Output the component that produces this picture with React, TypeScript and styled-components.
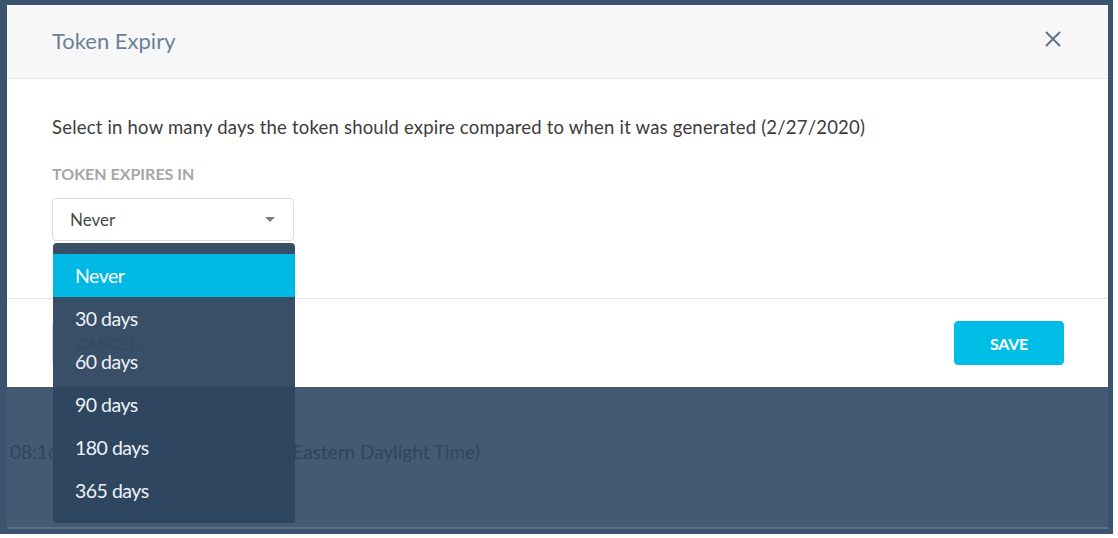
import styled, { createGlobalStyle } from "styled-components";

const GlobalStyle = createGlobalStyle`
  body {
    margin: 0;
    background: #ffffff;
    font-family: Lato, "Noto Sans", sans-serif;
  }
`;

const Frame = styled.div`
  width: 1113px;
  height: 534px;
  box-sizing: border-box;
  border-style: solid;
  border-color: #3a5470;
  border-width: 5px 5px 5px 7px;
  background: #435a72;
  display: flex;
  flex-direction: column;
`;

const Modal = styled.div`
  height: 382px;
  background: #ffffff;
  display: flex;
  flex-direction: column;
  flex-shrink: 0;
`;

const Header = styled.div`
  height: 74px;
  box-sizing: border-box;
  background: #f7f7f7;
  border-bottom: 1px solid #e3e7eb;
  display: flex;
  align-items: center;
  justify-content: space-between;
  padding: 0 46px 2px 45px;
`;

const Title = styled.h2`
  margin: 0;
  font-size: 22px;
  font-weight: 400;
  color: #6b8096;
`;

const CloseBtn = styled.button`
  border: 0;
  background: none;
  padding: 0;
  width: 18px;
  height: 18px;
  margin-bottom: 4px;
  color: #5f7388;
  display: flex;
  cursor: pointer;
`;

const Body = styled.div`
  height: 220px;
  box-sizing: border-box;
  padding: 36px 45px 0;
  border-bottom: 1px solid #e4e4e4;
`;

const Description = styled.p`
  margin: 0;
  font-size: 18.5px;
  letter-spacing: 0.2px;
  line-height: 24px;
  color: #3c3c3c;
`;

const Label = styled.div`
  margin-top: 25px;
  font-size: 16px;
  font-weight: 700;
  color: #a6a6a6;
  line-height: 20px;
`;

const SelectWrap = styled.div`
  position: relative;
  width: 242px;
  margin-top: 14px;
`;

const SelectBox = styled.div`
  height: 43px;
  box-sizing: border-box;
  border: 1px solid #dcdcdc;
  border-radius: 4px;
  display: flex;
  align-items: center;
  justify-content: space-between;
  padding: 0 18px 0 17px;
  font-size: 17px;
  color: #474747;
`;

const Caret = styled.span`
  width: 0;
  height: 0;
  border-left: 5px solid transparent;
  border-right: 5px solid transparent;
  border-top: 5px solid #7d7d7d;
`;

const Menu = styled.ul`
  position: absolute;
  top: 45px;
  left: 1px;
  width: 242px;
  margin: 0;
  padding: 11px 0;
  list-style: none;
  border-radius: 4px;
  background: rgba(45, 70, 95, 0.95);
  z-index: 10;
`;

const Option = styled.li<{ $active?: boolean }>`
  height: 43px;
  display: flex;
  align-items: center;
  padding-left: 22px;
  font-size: 19.5px;
  letter-spacing: -0.5px;
  color: ${({ $active }) => ($active ? "#ffffff" : "#eef2f5")};
  background: ${({ $active }) => ($active ? "#00b9e4" : "transparent")};
`;

const Footer = styled.div`
  flex: 1;
  display: flex;
  justify-content: space-between;
  align-items: flex-start;
  padding: 22px 44px 0 45px;
`;

const Button = styled.button<{ $primary?: boolean }>`
  width: 110px;
  height: 44px;
  border-radius: 4px;
  font-family: Lato, "Noto Sans", sans-serif;
  font-size: 16px;
  font-weight: 700;
  letter-spacing: -0.3px;
  text-transform: uppercase;
  cursor: pointer;
  border: 1px solid ${({ $primary }) => ($primary ? "#00bde6" : "#dcdcdc")};
  background: ${({ $primary }) => ($primary ? "#00bde6" : "#ffffff")};
  color: ${({ $primary }) => ($primary ? "#ffffff" : "#9a9a9a")};
`;

const BehindPage = styled.div`
  flex: 1;
  border-bottom: 2px solid #5c7188;
  padding: 53px 0 0 3px;
`;

const Timestamp = styled.div`
  font-size: 19px;
  color: #2e4660;
  white-space: nowrap;
`;

const options = ["Never", "30 days", "60 days", "90 days", "180 days", "365 days"];

export default function App() {
  return (
    <>
      <GlobalStyle />
      <Frame>
        <Modal>
          <Header>
            <Title>Token Expiry</Title>
            <CloseBtn aria-label="Close">
              <svg width="18" height="18" viewBox="0 0 18 18">
                <path
                  d="M2 2L16 16M16 2L2 16"
                  stroke="currentColor"
                  strokeWidth="2"
                  fill="none"
                />
              </svg>
            </CloseBtn>
          </Header>
          <Body>
            <Description>
              Select in how many days the token should expire compared to when it was generated
              (2/27/2020)
            </Description>
            <Label>TOKEN EXPIRES IN</Label>
            <SelectWrap>
              <SelectBox>
                Never
                <Caret />
              </SelectBox>
              <Menu>
                {options.map((o, i) => (
                  <Option key={o} $active={i === 0}>
                    {o}
                  </Option>
                ))}
              </Menu>
            </SelectWrap>
          </Body>
          <Footer>
            <Button>Cancel</Button>
            <Button $primary>Save</Button>
          </Footer>
        </Modal>
        <BehindPage>
          <Timestamp>08:16:45 2/27/2020 GMT-0400 (Eastern Daylight Time)</Timestamp>
        </BehindPage>
      </Frame>
    </>
  );
}
